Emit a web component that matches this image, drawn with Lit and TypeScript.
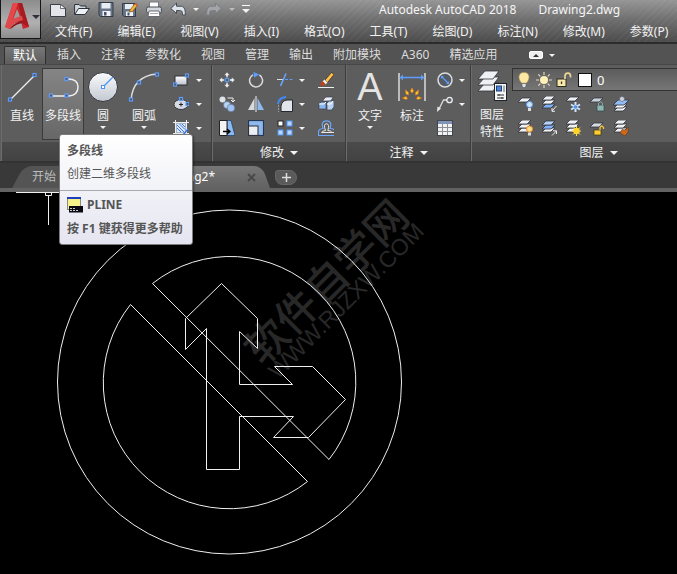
import { LitElement, html, css, svg, TemplateResult, SVGTemplateResult } from "lit";
import { customElement } from "lit/decorators.js";

const grip = (x: number, y: number) =>
  svg`<rect x=${x - 1.5} y=${y - 1.5} width="3" height="3" fill="#4a4f58" stroke="#5c9dff" stroke-width="1.2"/>`;

const sheet = (y: number, fill = "#eef0f4") =>
  svg`<path d=${`M1 ${y + 4}L5 ${y}H14L10 ${y + 4}Z`} fill=${fill} stroke="#30333a" stroke-width=".8"/>`;

const ICONS: Record<string, SVGTemplateResult> = {
  newFile: svg`<path d="M.5 3.5H10.500L15.500 7.500V15.500H.5Z" fill="#e3e5ea" stroke="#3a3e46"/><path d="M10.500 3.500V7.500H15.500Z" fill="#fff" stroke="#3a3e46" stroke-width=".7"/>`,
  open: svg`<path d="M.6 13V3.500H5L6.500 5H12V7" fill="#d4d8e0" stroke="#2c313b"/><path d="M.8 13.500L4.500 7.500H15.500L11 13.500Z" fill="#eef1f7" stroke="#2c313b"/>`,
  save: svg`<path d="M1 1.500H15V15.500H2.500L1 14Z" fill="#687589" stroke="#323a48"/><rect x="3.500" y="2" width="9" height="5.500" fill="#e8edf4"/><rect x="4.500" y="10" width="8" height="5" fill="#f2f4f8"/><rect x="6" y="11" width="2.500" height="3.500" fill="#465368"/>`,
  saveAs: svg`<path d="M.6 2.500H13.500V15.500H2L.6 14Z" fill="#687589" stroke="#323a48"/><rect x="3" y="3" width="8" height="5" fill="#e8edf4"/><rect x="4" y="10.500" width="7" height="4.500" fill="#f2f4f8"/><rect x="5.500" y="11.500" width="2" height="3" fill="#465368"/><path d="M8 9L13.500 2L15.800 4L10.500 10.500L7.500 11Z" fill="#f5b43c" stroke="#7c4c10" stroke-width=".7"/><path d="M13.500 2L15.800 4L15 5L12.600 3.200Z" fill="#dc5845"/>`,
  print: svg`<rect x="3.500" y="1" width="9" height="6" fill="#fff" stroke="#767b84"/><rect x=".6" y="6" width="14.800" height="6" rx="1.500" fill="#d5d8de" stroke="#484c55"/><path d="M3 10H13L14 15.500H2Z" fill="#fff" stroke="#666b74"/><path d="M4 12.500H12" stroke="#a6abb5"/>`,
  undo: svg`<path d="M.8 7.500L6.500 2V5.200H10C14 5.200 15.500 7.500 15.300 14H12.500C12.500 10.500 12 9.500 9.500 9.500H6.500V12.500Z" fill="#dfe3ea" stroke="#454b56"/>`,
  redo: svg`<path d="M15.200 7.500L9.500 2V5.200H6C2 5.200 .5 7.500 .7 14H3.500C3.500 10.500 4 9.500 6.500 9.500H9.500V12.500Z" fill="#a2a4a8" stroke="#7c7e83"/>`,
  rect: svg`<defs><linearGradient id="rg" x2="0" y2="1"><stop stop-color="#fff"/><stop offset="1" stop-color="#bcc3cd"/></linearGradient></defs><rect x="2" y="4" width="12" height="9" fill="url(#rg)" stroke="#2e3138"/>${grip(14, 3.5)}${grip(2, 12.5)}`,
  ellipse: svg`<ellipse cx="8" cy="8.500" rx="7" ry="5" fill="#d6dae2" stroke="#3a3d44"/><path d="M8 6.500V10.500M6 8.500H10" stroke="#222"/>${grip(8, 3)}${grip(14.500, 8)}`,
  hatch: svg`<rect x="3.500" y="3.500" width="9" height="9" fill="#dfe9fb" stroke="#a7b6d0"/><path d="M4 5L11 12M6.500 4L12 9.500M9 4L12 7M4 8L8 12" stroke="#3a78df"/><path d="M2.500 0V16M13.500 0V16M0 2.500H16M0 13.500H16" stroke="#eee"/><path d="M10 15L15 9" stroke="#3a78df" stroke-width="1.500"/>`,
  move: svg`<path d="M8 0L11 3.500H9V5.500H7V3.500H5ZM8 16L5 12.500H7V10.500H9V12.500H11ZM0 8L3.500 5V7H5.500V9H3.500V11ZM16 8L12.500 11V9H10.500V7H12.500V5Z" fill="#eee" stroke="#444" stroke-width=".4"/><rect x="6.300" y="6.300" width="3.400" height="3.400" fill="#55606f" stroke="#5c9dff"/>`,
  rotate: svg`<path d="M5 2.800A6.500 6.500 0 1 0 11.500 3" fill="none" stroke="#d8dadd" stroke-width="1.500"/><path d="M5.500 0L11.500 2.500L6 5.500Z" fill="#5c9dff"/>`,
  trim: svg`<path d="M0 7.500H6" stroke="#ddd"/><path d="M8 7.500H16" stroke="#5c9dff" stroke-dasharray="3 1.500"/><path d="M3.500 14L9 1.500" stroke="#6ba6ff" stroke-width="1.500"/>`,
  erase: svg`<path d="M7 8L13.500 .5L16 2.500L9.500 10.500Z" fill="#ffbf4d" stroke="#3c2a18" stroke-width=".7"/><path d="M6.500 7.500L9.500 10.500L7.500 12.500L4.500 9.500Z" fill="#eee"/><path d="M4.500 9L7.500 12Q6 14.500 2.500 13.500Q2.500 10 4.500 9Z" fill="#c5401c"/><path d="M0 15.500H16" stroke="#f0f0f0"/>`,
  copy: svg`<circle cx="3.500" cy="3.500" r="3" fill="#dfe2e8"/><circle cx="8" cy="9" r="3.500" fill="#b8d2f5" stroke="#596d88" stroke-width=".6"/><circle cx="12" cy="12" r="3.800" fill="#9fc1f1" stroke="#596d88" stroke-width=".6"/><path d="M8.500 2H14V5M12 4L14 6L16 4" fill="none" stroke="#eee"/>`,
  mirror: svg`<path d="M0 14L6.500 2V14Z" fill="#d5d9e0"/><path d="M16 14L9.500 2V14Z" fill="#8db9ee"/><path d="M8 0V16" stroke="#f4f4f4"/>`,
  fillet: svg`<path d="M4 15.500V10Q5 4.500 10 4H15.500V15.500Z" fill="#e1e4e9" stroke="#252830"/><path d="M.8 8Q2 1.500 9 1" fill="none" stroke="#3e8bff" stroke-width="1.800"/><path d="M1.500 9V16" stroke="#999" stroke-dasharray="2 1"/>`,
  explode: svg`<path d="M5 4L8 1H15L13 5H5Z" fill="#e7edf6" stroke="#39414e" stroke-width=".7"/><path d="M1 8L3 6H8V13H1Z" fill="#8bb5ed" stroke="#39414e" stroke-width=".7"/><path d="M9 7L11 5H16V11L13.500 14H9Z" fill="#b7d2f5" stroke="#39414e" stroke-width=".7"/><path d="M1 8H6L8 6M9 8H13L15 5" fill="none" stroke="#fff"/>`,
  stretch: svg`<path d="M8 .5H12L16 15.500H8Z" fill="#8bb9f1" stroke="#213a60" stroke-width=".7"/><path d="M.5 .5H8V15.500H.5Z" fill="#f3f3f5" stroke="#222"/><path d="M4 11.500H10M8 9L11 11.500L8 14" fill="none" stroke="#000" stroke-width="1.300"/>`,
  scale: svg`<rect x=".6" y=".6" width="14.800" height="14.800" fill="#8eb9ef" stroke="#1e2f4e"/><rect x=".6" y="6" width="9.400" height="9.400" fill="#eceef1" stroke="#252b36"/>`,
  array: svg`<rect x="1" y="1" width="5" height="5" fill="#fff" stroke="#222"/><g fill="#b9d5fb" stroke="#4c94f7"><rect x="10" y="1" width="5" height="5"/><rect x="1" y="10" width="5" height="5"/><rect x="10" y="10" width="5" height="5"/></g>`,
  offset: svg`<path d="M16 15.500H.5V12Q.5 9 5 8.500Q2.500 .8 8.500 .8T12 8.500Q15.500 8.500 16 10" fill="none" stroke="#6ba6ff" stroke-width="1.200"/><path d="M16 12.500H3.500Q3.500 11 7.500 10.500Q5 3.800 8.500 3.800T9.800 10.500Q13 10.500 14 12.500" fill="none" stroke="#e8e8e8"/>`,
  dim: svg`<circle cx="8" cy="8" r="7" fill="#555b63" stroke="#ddd" stroke-width="1.500"/><path d="M5 5L11 11" stroke="#5c9dff" stroke-width="1.300"/><path d="M4 4H7L4 7ZM12 12H9L12 9Z" fill="#5c9dff"/>`,
  leader: svg`<path d="M2 13L6.500 4H10" fill="none" stroke="#ddd" stroke-width="1.300"/><path d="M0 16L.5 10.500L4 12.500Z" fill="#e8e8e8"/><circle cx="12.500" cy="4" r="2.700" fill="#60656d" stroke="#eee" stroke-width="1.300"/>`,
  table: svg`<rect x=".5" y=".5" width="15" height="15" fill="#f2f2f2" stroke="#42464d"/><rect x="1" y="1" width="14" height="3" fill="#8293b8"/><path d="M1 7.500H15M1 11.500H15M5.500 4V15M10.500 4V15" stroke="#8b8e94"/>`,
  bulb: svg`<path d="M5.500 11Q3 8 3 5.500Q3 .5 8 .5T13 5.500Q13 8 10.500 11Z" fill="#fde9a4" stroke="#b99d54" stroke-width=".6"/><path d="M6 11.500H10V14L9 15.500H7L6 14Z" fill="#dcdfe5" stroke="#555" stroke-width=".5"/>`,
  sun: svg`<circle cx="8" cy="8" r="4" fill="#fff0b8"/><path d="M8 0V3M8 13V16M0 8H3M13 8H16M2.300 2.300L4.300 4.300M11.700 11.700L13.700 13.700M2.300 13.700L4.300 11.700M11.700 4.300L13.700 2.300" stroke="#e6d9bd" stroke-width="1.200"/>`,
  unlock: svg`<rect x="1" y="7" width="9" height="7.500" fill="#f9e8a6" stroke="#2c2a21"/><path d="M9 7V3.500Q9.500 1 12 1.200T14.500 4V5.500" fill="none" stroke="#e8d694" stroke-width="1.700"/><path d="M5.500 9.500V12" stroke="#333" stroke-width="1.300"/>`,
  l1: svg`${sheet(2)}<circle cx="12.500" cy="8.500" r="3" fill="#cfe5ff" stroke="#5d9df5"/><rect x="11" y="12" width="3" height="3" fill="#ddd"/>`,
  l2: svg`${sheet(8, "#7fb0f4")}${sheet(4)}${sheet(0)}<path d="M15.500 10L11 15M11 12V15.300H14" fill="none" stroke="#eee"/>`,
  l3: svg`${sheet(1)}<path d="M10.500 6V16M6 8.500L15 13.500M15 8.500L6 13.500" stroke="#cfe5ff" stroke-width="2"/><circle cx="10.500" cy="11" r="1.800" fill="#4e93ee"/>`,
  l4: svg`${sheet(2, "#c9cfdb")}<rect x="8" y="9" width="7" height="6" fill="#91b5b2" stroke="#33494a" stroke-width=".7"/><path d="M9.500 9V7.500Q11.500 4 13.500 7.500V9" fill="none" stroke="#91b5b2"/>`,
  l5: svg`${sheet(11)}${sheet(8)}<path d="M0 9L5 4H16L11 9Z" fill="#91bcf7" stroke="#30333a" stroke-width=".8"/><circle cx="9" cy="3" r="2.500" fill="#ccd2dc" stroke="#596070" stroke-width=".6"/>`,
  l6: svg`${sheet(8)}${sheet(4)}${sheet(0)}<circle cx="12.500" cy="9" r="3" fill="#ffe08a" stroke="#f18b20"/><rect x="11" y="12.500" width="3" height="3" fill="#ddd"/>`,
  l7: svg`${sheet(8)}${sheet(5, "#7fb0f4")}${sheet(1, "#b7d2f8")}<path d="M11 15.500L15.500 11M12 10.800H15.500V14" fill="none" stroke="#eee"/>`,
  l8: svg`${sheet(8)}${sheet(4)}${sheet(0)}<path d="M11.500 6V16M6.500 11H16M8 7.500L15 14.500M15 7.500L8 14.500" stroke="#ffe14d"/><circle cx="11.500" cy="11" r="3.200" fill="#ffd426"/>`,
  l9: svg`${sheet(3, "#d5d9e2")}<rect x="5" y="10" width="7" height="5" fill="#ffce2e" stroke="#3f3310" stroke-width=".7"/><path d="M11 10V7.500Q12.500 4.500 14.500 7.500V9" fill="none" stroke="#f4c93c" stroke-width="1.300"/>`,
  l10: svg`${sheet(8)}${sheet(4)}${sheet(0)}<path d="M15.500 7L12 10L9 9.500L7 13L12 16L15 12Z" fill="#c9691f" stroke="#5b2c0c" stroke-width=".5"/>`,
};

const icon = (name: string) => html`<svg class="ic" viewBox="0 0 16 16" aria-hidden="true">${ICONS[name]}</svg>`;

const MENUS = ["文件(F)", "编辑(E)", "视图(V)", "插入(I)", "格式(O)", "工具(T)", "绘图(D)", "标注(N)", "修改(M)", "参数(P)"];
const TABS = ["默认", "插入", "注释", "参数化", "视图", "管理", "输出", "附加模块", "A360", "精选应用"];

@customElement("app-root")
export class AppRoot extends LitElement {
  static styles = css`
    :host { display: flex; flex-direction: column; min-height: 100vh; overflow: hidden; background: #000; color: #f2f2f2;
      font: 12px/16px "Noto Sans", "Noto Sans CJK SC", sans-serif; }
    * { box-sizing: border-box; }
    button { background: none; border: 0; padding: 0; margin: 0; color: inherit; font: inherit; white-space: nowrap; }
    a { color: inherit; text-decoration: none; white-space: nowrap; }
    svg { display: block; flex: none; }
    .ic { width: 16px; height: 16px; }
    .caret { display: block; width: 0; height: 0; border: 3px solid transparent; border-top-color: #f2f2f2; border-bottom: 0; flex: none; }
    .caret.big { border-width: 4px; border-bottom: 0; }
    .caret.dark { border-width: 4px; border-bottom: 0; border-top-color: #2b303a; }

    header { display: flex; height: 44px; border-bottom: 2px solid #2c2c2c;
      background: repeating-linear-gradient(135deg, #ffffff0a 0 1px, transparent 1px 5px), linear-gradient(#969696, #707070 45%, #4c4c4c); }
    .app { width: 41px; height: 39px; display: flex; align-items: center; gap: 2px; padding-left: 4px; padding-bottom: 4px;
      background: linear-gradient(#8d8d8d, #b0b0b0 60%, #8c8c8c); border: 1px solid #161616; border-top: 0; }
    .bars { flex: 1; min-width: 0; display: flex; flex-direction: column; gap: 1px; }
    .qat { display: flex; align-items: center; height: 20px; gap: 8px; padding: 0 0 2px 9px; }
    .drop { width: 4px; display: flex; justify-content: center; }
    .dim { opacity: .5; }
    .more { width: 8px; border-top: 1px solid #fff; padding-top: 3px; }
    .title { margin-left: 121px; padding-top: 2px; display: flex; gap: 22px; white-space: nowrap; color: #f5f5f5; }
    .menu { display: flex; align-items: center; gap: 25px; height: 24px; padding-left: 14px; }

    .tabs { display: flex; height: 20px; align-items: flex-end; background: #535353; padding-left: 4px; }
    .tabs button { height: 18px; padding: 0 10px; color: #dcdcdc; }
    .tabs .on { padding: 0 8px; margin-right: 1px; background: linear-gradient(#777, #5e5e5e); border: 1px solid #2f2f2f; border-bottom: 0; border-radius: 2px 2px 0 0; color: #fff; }
    .tabs .mini { display: flex; align-items: center; gap: 6px; margin-left: 12px; }
    .pill { width: 14px; height: 8px; border-radius: 2px; background: #eee; display: flex; align-items: center; justify-content: center; border: 1px solid #fff; }
    .up { width: 0; height: 0; border: 3px solid transparent; border-bottom-color: #333; border-top: 0; }

    .ribbon { display: flex; height: 99px; background: #5d5d5d; border-top: 1px solid #474747; border-bottom: 2px solid #333; padding-left: 1px; }
    .panel { flex: none; display: flex; flex-direction: column; border-left: 1px solid #6c6c6c; border-right: 1px solid #3c3c3c; }
    .panel.draw { width: 211px; } .panel.edit { width: 134px; } .panel.note { width: 125px; }
    .panel.layer { flex: 1; min-width: 0; border-right: 0; }
    .body { flex: 1; display: flex; padding-top: 3px; }
    .name { height: 19px; display: flex; align-items: center; justify-content: center; gap: 6px; padding-top: 2px; background: linear-gradient(#4b4b4b, #424242); }
    .layer .name { padding-left: 48px; }
    .tool { height: 72px; display: flex; flex-direction: column; align-items: center; padding-top: 3px; position: relative; }
    .tool svg { margin-bottom: 5px; }
    .tool .caret { margin-top: 2px; }
    .w38 { width: 38px; } .w40 { width: 40px; } .w42 { width: 42px; } .w44 { width: 44px; }
    .hot { background: linear-gradient(#858585, #676767); outline: 1px solid #3a3a3a; outline-offset: -1px; }
    .grid { display: grid; grid-auto-rows: 24px; align-items: center; align-content: start; }
    .g1 { grid-template-columns: 23px 8px; padding-left: 7px; }
    .g2 { grid-template-columns: 29px 29px 22px 19px 16px; padding-left: 6px; }
    .g3 { grid-template-columns: 22px 8px; padding-left: 4px; }
    .g4 { grid-template-columns: repeat(5, 24px); padding-left: 5px; }
    .note .body { padding-left: 2px; }
    .bigA { font: 38px/32px "Liberation Sans", sans-serif; height: 37px; color: #e4e4e4; }
    .props { display: flex; flex-direction: column; align-items: center; width: 40px; line-height: 17px; padding-top: 2px; }
    .props svg { margin-bottom: 2px; }
    .stack { flex: 1; min-width: 0; }
    .combo { display: flex; align-items: center; gap: 4px; height: 23px; border: 1px solid #333; border-right: 0; background: linear-gradient(#5c5c5c, #767676); padding-left: 3px; margin-bottom: 1px; }
    .swatch { width: 14px; height: 14px; background: #fff; border: 1px solid #111; margin: 0 1px 0 2px; }
    .combo select { flex: 1; min-width: 0; appearance: none; border: 0; background: none; color: #fff; font: inherit; font-size: 13px; padding: 0; }

    .docs { display: flex; align-items: flex-end; height: 29px; background: #393939; border-bottom: 4px solid #626262; }
    .doc { position: relative; isolation: isolate; display: flex; align-items: center; height: 22px; color: #bdbdbd; }
    .doc::before { content: ""; position: absolute; inset: 0; z-index: -1; border-radius: 8px 8px 0 0; background: #545454; }
    .start { width: 112px; padding-left: 14px; margin-left: 18px; } .start::before { transform: skewX(-28deg); }
    .cur { width: 136px; padding: 0 10px 0 24px; justify-content: space-between; color: #fff; } .cur::before { transform: skewX(20deg); background: linear-gradient(#777, #626262); }
    .plus { width: 22px; height: 15px; margin: 0 0 3px 9px; border-radius: 3px 8px 8px 8px; background: #5a5a5a; border: 1px solid #686868; display: flex; align-items: center; justify-content: center; }

    .tip { position: absolute; left: 17px; top: 66px; z-index: 5; width: 134px; height: 111px; border: 1px solid #7c7c7c; border-radius: 3px; background: linear-gradient(#fff, #e4e5f0); color: #555; text-align: left; box-shadow: 1px 1px 2px #0006; }
    .wrap { position: relative; }
    .tip p { margin: 0; padding: 0 7px; white-space: nowrap; }
    .tip .h { font-weight: 700; padding-top: 8px; }
    .tip .d { padding-top: 7px; padding-bottom: 8px; border-bottom: 1px solid #a9a9ae; }
    .tip .c { display: flex; align-items: center; gap: 4px; font-weight: 700; padding-top: 6px; }
    .tip .f { font-weight: 700; padding-top: 8px; }
    main { flex: 1; overflow: hidden; background: #000; }
    .wm { fill: #282828; }
    .wm1 { font: 500 42px "Noto Sans CJK SC", sans-serif; }
    .wm2 { font: 23px "Liberation Sans", sans-serif; }
  `;

  private caret(): TemplateResult {
    return html`<i class="caret"></i>`;
  }

  private small(name: string, label: string): TemplateResult {
    return html`<button aria-label=${label}>${icon(name)}</button>`;
  }

  private name(label: string): TemplateResult {
    return html`<button class="name">${label}<i class="caret big"></i></button>`;
  }

  render() {
    return html`
      <header>
        <button class="app" aria-label="应用程序菜单">
          <svg width="25" height="30" viewBox="0 0 25 30">
            <path d="M0 25L8 1H17L24 25L18 27L16 20L8 21L5 27Z" fill="#c9272b"/>
            <path d="M8 1H13L6 22L0 25Z" fill="#e4484a"/>
            <path d="M13 1H17L24 25L18 22Z" fill="#a61c22"/>
            <path d="M12 7L16 17L8 18Z" fill="#9d9d9d"/>
            <path d="M3 22Q8 15 17 14L18 18Q9 19 5 27L0 25Z" fill="#dc4a4b"/>
            <path d="M5 27Q9 20 17 19L18 21Q11 22 7 26Z" fill="#8c161c"/>
          </svg><i class="caret dark"></i>
        </button>
        <div class="bars">
          <div class="qat">
            ${this.small("newFile", "新建")}${this.small("open", "打开")}${this.small("save", "保存")}
            ${this.small("saveAs", "另存为")}${this.small("print", "打印")}${this.small("undo", "放弃")}
            <button class="drop" aria-label="放弃列表">${this.caret()}</button>
            ${this.small("redo", "重做")}
            <button class="drop dim" aria-label="重做列表">${this.caret()}</button>
            <button class="more" aria-label="自定义"><i class="caret big"></i></button>
            <div class="title"><span>Autodesk AutoCAD 2018</span><span>Drawing2.dwg</span></div>
          </div>
          <nav class="menu">${MENUS.map((m) => html`<a href="#">${m}</a>`)}</nav>
        </div>
      </header>
      <div class="tabs">
        ${TABS.map((t, i) => html`<button class=${i === 0 ? "on" : ""}>${t}</button>`)}
        <button class="mini" aria-label="最小化功能区"><span class="pill"><i class="up"></i></span>${this.caret()}</button>
      </div>
      <section class="ribbon">
        <div class="panel draw">
          <div class="body">
            <button class="tool w40">
              <svg width="32" height="32" viewBox="0 0 32 32"><path d="M4 29L28 5" stroke="#eee" stroke-width="1.300"/>${grip(4, 28.5)}${grip(28.5, 4)}</svg>直线
            </button>
            <div class="wrap">
              <button class="tool w42 hot">
                <svg width="34" height="32" viewBox="0 0 34 32"><path d="M5 25H23Q32 24 32 16T22 8" fill="none" stroke="#eee" stroke-width="1.500"/>${grip(5, 24.5)}${grip(20.500, 24.5)}${grip(20.500, 8)}</svg>多段线
              </button>
              <div class="tip" role="tooltip">
                <p class="h">多段线</p>
                <p class="d">创建二维多段线</p>
                <p class="c">
                  <svg width="16" height="16" viewBox="0 0 16 16"><rect x=".5" y=".5" width="13" height="12" fill="#f5f28c" stroke="#8c8c7c"/><path d="M0 1H14" stroke="#1b3fbf" stroke-width="2"/><rect x="2" y="9" width="14" height="6.500" fill="#0a0a12"/><path d="M3 11.500H8M3 13.500H12" stroke="#ccc" stroke-dasharray="2 1"/></svg>
                  PLINE
                </p>
                <p class="f">按 F1 键获得更多帮助</p>
              </div>
            </div>
            <button class="tool w38">
              <svg width="32" height="32" viewBox="0 0 32 32"><defs><linearGradient id="cg" x2="0" y2="1"><stop stop-color="#fafbfd"/><stop offset="1" stop-color="#c3c8d1"/></linearGradient></defs><circle cx="16" cy="16" r="14.500" fill="url(#cg)" stroke="#33363c"/><path d="M16 16L26 6" stroke="#4b93f5" stroke-width="1.300"/><rect x="14.500" y="14.500" width="3" height="3" fill="#fff" stroke="#4b93f5"/></svg>圆${this.caret()}
            </button>
            <button class="tool w44">
              <svg width="32" height="32" viewBox="0 0 32 32"><path d="M3 29Q5 5 29 3" fill="none" stroke="#ddd" stroke-width="1.500"/>${grip(3, 28.5)}${grip(11, 11.500)}${grip(29, 3.500)}</svg>圆弧${this.caret()}
            </button>
            <div class="grid g1">
              ${this.small("rect", "矩形")}${this.caret()}${this.small("ellipse", "椭圆")}${this.caret()}${this.small("hatch", "图案填充")}${this.caret()}
            </div>
          </div>
          <div class="name"></div>
        </div>
        <div class="panel edit">
          <div class="body">
            <div class="grid g2">
              ${this.small("move", "移动")}${this.small("rotate", "旋转")}${this.small("trim", "修剪")}${this.caret()}${this.small("erase", "删除")}
              ${this.small("copy", "复制")}${this.small("mirror", "镜像")}${this.small("fillet", "圆角")}${this.caret()}${this.small("explode", "分解")}
              ${this.small("stretch", "拉伸")}${this.small("scale", "缩放")}${this.small("array", "阵列")}${this.caret()}${this.small("offset", "偏移")}
            </div>
          </div>
          ${this.name("修改")}
        </div>
        <div class="panel note">
          <div class="body">
            <button class="tool w42"><span class="bigA" aria-hidden="true">A</span>文字${this.caret()}</button>
            <button class="tool w42">
              <svg width="28" height="32" viewBox="0 0 28 32"><path d="M1 2V30M27 2V30" stroke="#eee" stroke-width="1.300"/><path d="M4 6.500H24" stroke="#5c9dff" stroke-width="1.500"/><path d="M1.500 6.500L5 3.500V9.500ZM26.500 6.500L23 3.500V9.500Z" fill="#5c9dff"/><g fill="#ffcb2e" stroke="#e57b12" stroke-width=".7"><path d="M14 17L15.500 20L14 22L12.500 20Z"/><path d="M7.500 19L10.500 21.500V24L8 23Z"/><path d="M20.500 19L17.500 21.500V24L20 23Z"/><path d="M4.500 27L8 25.500L9.500 27.500L8 28.500Z"/><path d="M23.500 27L20 25.500L18.500 27.500L20 28.500Z"/></g></svg>标注
            </button>
            <div class="grid g3">
              ${this.small("dim", "直径")}${this.caret()}${this.small("leader", "引线")}${this.caret()}${this.small("table", "表格")}
            </div>
          </div>
          ${this.name("注释")}
        </div>
        <div class="panel layer">
          <div class="body">
            <button class="props">
              <svg width="32" height="34" viewBox="0 0 32 34">
                <g fill="#eef0f4" stroke="#33363d" stroke-width=".8"><path d="M2 21L9 13H23L17 21Z"/><path d="M2 15L9 7H23L17 15Z"/><path d="M2 9L9 1H23L17 9Z"/></g>
                <rect x="18.500" y="13.500" width="12" height="17" fill="#f5f6f8" stroke="#1e222a"/><rect x="20.500" y="16" width="5" height="5" fill="#4a86dc" stroke="#22406f"/><path d="M28 15.500V22" stroke="#8a8f98" stroke-width="1.500"/><path d="M21 25H28M21 28H28M23 24V26M26 27V29" stroke="#333"/>
              </svg><span>图层</span><span>特性</span>
            </button>
            <div class="stack">
              <div class="combo">
                ${icon("bulb")}${icon("sun")}${icon("unlock")}<span class="swatch"></span>
                <select aria-label="图层"><option>0</option></select>
              </div>
              <div class="grid g4">
                ${["关", "隔离", "冻结", "锁定", "置为当前", "打开所有", "取消隔离", "解冻", "解锁", "匹配"].map((l, i) => this.small("l" + (i + 1), l))}
              </div>
            </div>
          </div>
          ${this.name("图层")}
        </div>
      </section>
      <div class="docs">
        <button class="doc start">开始</button>
        <div class="doc cur"><span>Drawing2*</span><button aria-label="关闭"><svg width="9" height="9" viewBox="0 0 9 9"><path d="M1 1L8 8M8 1L1 8" stroke="#484848" stroke-width="1.800"/></svg></button></div>
        <button class="plus" aria-label="新图形"><svg width="9" height="9" viewBox="0 0 9 9"><path d="M4.500 0V9M0 4.500H9" stroke="#ddd" stroke-width="1.500"/></svg></button>
      </div>
      <main>
        <svg width="440" height="382" viewBox="0 192 440 382">
          <g class="wm">
            <text class="wm1" transform="translate(263 367) rotate(-45)">软件自学网</text>
            <text class="wm2" transform="translate(278 380) rotate(-45)">WWW.RJZXW.COM</text>
          </g>
          <g fill="none" stroke="#f0f0f0">
            <path d="M16 192.500H60M48.500 196V225M45.500 192V195.500H51.500V192"/>
            <circle cx="229.500" cy="382" r="172"/>
            <path d="M152.500 283.500A125.500 125.500 0 0 1 329 459.500Z"/>
            <path d="M130.500 304.500A126 126 0 0 0 307.500 481.500Z"/>
            <path d="M221.500 283.500L257.500 318.500V348.500L239.500 331.500V384.500H292.500L274.500 366.500H312.500L345.500 399.500L308.500 437.500H273.500L293.500 416.500H239.500V469.500H206.500V328.500L185.500 349.500V318.500Z"/>
          </g>
        </svg>
      </main>
    `;
  }
}
